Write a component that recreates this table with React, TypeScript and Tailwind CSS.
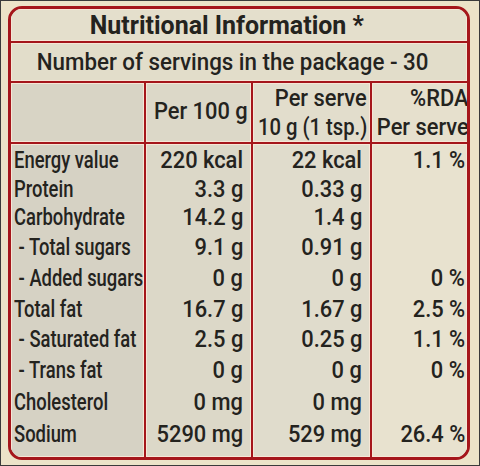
import React from 'react';

const rows = [
  { label: 'Energy value', per100: '220 kcal', serve: '22 kcal', rda: '1.1 %', h: 'h-[30px]' },
  { label: 'Protein', per100: '3.3 g', serve: '0.33 g', rda: '', h: 'h-[28px]' },
  { label: 'Carbohydrate', per100: '14.2 g', serve: '1.4 g', rda: '', h: 'h-[29px]' },
  { label: ' - Total sugars', per100: '9.1 g', serve: '0.91 g', rda: '', h: 'h-[31px]' },
  { label: ' - Added sugars', per100: '0 g', serve: '0 g', rda: '0 %', h: 'h-[31px]' },
  { label: 'Total fat', per100: '16.7 g', serve: '1.67 g', rda: '2.5 %', h: 'h-[30px]' },
  { label: ' - Saturated fat', per100: '2.5 g', serve: '0.25 g', rda: '1.1 %', h: 'h-[31px]' },
  { label: ' - Trans fat', per100: '0 g', serve: '0 g', rda: '0 %', h: 'h-[31px]' },
  { label: 'Cholesterol', per100: '0 mg', serve: '0 mg', rda: '', h: 'h-[32px]' },
  { label: 'Sodium', per100: '5290 mg', serve: '529 mg', rda: '26.4 %', h: 'h-[32px]' },
];

const font = {
  fontFamily: 'Roboto, "Noto Sans", sans-serif',
};

const halo = 'shadow-[inset_1px_1px_0_#f6e6d6,inset_-1px_-1px_0_#f6e6d6]';

const Right = ({ children }: { children: React.ReactNode }) => (
  <span className="inline-block whitespace-pre scale-x-[0.95] origin-right">{children}</span>
);
const Left = ({ children }: { children: React.ReactNode }) => (
  <span className="inline-block whitespace-pre scale-x-[0.8] origin-left">{children}</span>
);

export default function App() {
  return (
    <div
      className="w-[480px] h-[466px] bg-[#ece3c8] border border-[#3a3a3a] pl-[7px] pr-[9px] pt-[5px] pb-[5px] text-[#24231e] font-medium"
      style={font}
    >
      <div className="h-full rounded-[14px] border-[3px] border-[#a5161b] overflow-hidden flex flex-col bg-[#dcd8c8]">
        {/* Title */}
        <div className={`h-[32px] flex items-center justify-center pr-[24px] text-[26px] font-bold bg-[#e4dfcc] ${halo}`}>
          <span className="inline-block whitespace-nowrap scale-x-[0.96]">Nutritional Information *</span>
        </div>
        <div className="h-[2px] bg-[#a5161b]" />
        {/* Servings */}
        <div className={`h-[38px] flex items-center justify-center pr-[12px] text-[24px] bg-[#e2ddca] ${halo}`}>
          <span className="inline-block whitespace-nowrap scale-x-[0.93]">Number of servings in the package - 30</span>
        </div>
        <div className="h-[2px] bg-[#a5161b]" />
        {/* Header */}
        <div className="h-[59px] grid grid-cols-[133px_2px_105px_2px_117px_2px_1fr] text-[23px]">
          <div className={`bg-[#d8d4c5] ${halo}`} />
          <div className="bg-[#a5161b]" />
          <div className={`flex items-center justify-end pr-[3px] bg-[#dcd8c8] ${halo}`}>
            <Right>Per 100 g</Right>
          </div>
          <div className="bg-[#a5161b]" />
          <div className={`flex flex-col items-end justify-center pr-[3px] leading-[29px] bg-[#e2ddcc] ${halo}`}>
            <Right>Per serve</Right>
            <span className="inline-block whitespace-pre scale-x-[0.88] origin-right">10 g (1 tsp.)</span>
          </div>
          <div className="bg-[#a5161b]" />
          <div className={`flex flex-col items-end justify-center pr-[2px] leading-[29px] bg-[#e6e0cd] ${halo}`}>
            <Right>%RDA</Right>
            <Right>Per serve</Right>
          </div>
        </div>
        <div className="h-[2px] bg-[#a5161b]" />
        {/* Body */}
        <div className="flex-1 grid grid-cols-[133px_2px_105px_2px_117px_2px_1fr] text-[23px]">
          <div className={`pt-[2px] pl-[3px] bg-[#d6d2c4] ${halo}`}>
            {rows.map((r) => (
              <div key={r.label} className={`${r.h} flex items-center`}>
                <Left>{r.label}</Left>
              </div>
            ))}
          </div>
          <div className="bg-[#a5161b]" />
          <div className={`pt-[2px] pr-[8px] bg-[#dcd8c8] ${halo}`}>
            {rows.map((r) => (
              <div key={r.label} className={`${r.h} flex items-center justify-end`}>
                <Right>{r.per100}</Right>
              </div>
            ))}
          </div>
          <div className="bg-[#a5161b]" />
          <div className={`pt-[2px] pr-[8px] bg-[#e0dccc] ${halo}`}>
            {rows.map((r) => (
              <div key={r.label} className={`${r.h} flex items-center justify-end`}>
                <Right>{r.serve}</Right>
              </div>
            ))}
          </div>
          <div className="bg-[#a5161b]" />
          <div className={`pt-[2px] pr-[2px] bg-[#e8e2cf] ${halo}`}>
            {rows.map((r) => (
              <div key={r.label} className={`${r.h} flex items-center justify-end`}>
                <Right>{r.rda}</Right>
              </div>
            ))}
          </div>
        </div>
      </div>
    </div>
  );
}
